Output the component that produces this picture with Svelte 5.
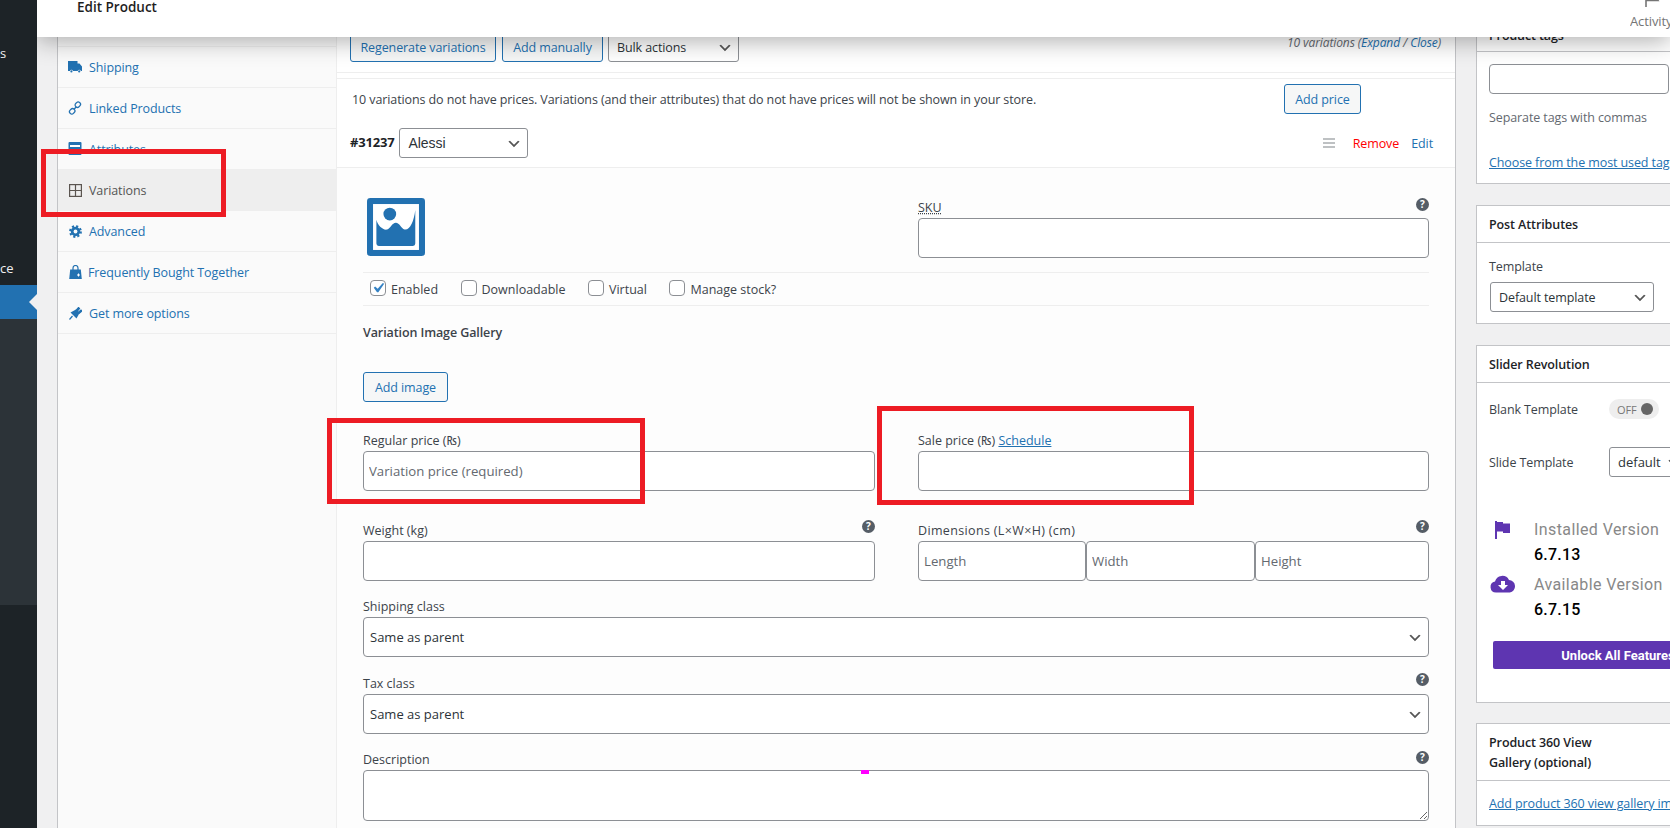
<script lang="ts">
const tabs = [
  { id: 'shipping', label: 'Shipping' },
  { id: 'linked', label: 'Linked Products' },
  { id: 'attributes', label: 'Attributes' },
  { id: 'variations', label: 'Variations', active: true },
  { id: 'advanced', label: 'Advanced' },
  { id: 'bought', label: 'Frequently Bought Together' },
  { id: 'options', label: 'Get more options' }
];
</script>

<div class="page">
  <nav class="adminmenu">
    <div class="menu-top">
      <span class="menu-s">s</span>
      <span class="menu-ce">ce</span>
    </div>
    <div class="menu-active"></div>
    <div class="menu-sub"></div>
  </nav>

  <div class="wpbody">
    <header class="topbar">
      <h1>Edit Product</h1>
      <div class="activity">
        <svg width="20" height="14" viewBox="0 0 20 14" fill="none" stroke="#757575" stroke-width="1.6">
          <path d="M4 0v14M4 1.5h12l-2 3 2 3H4" />
        </svg>
        <span>Activity</span>
      </div>
    </header>

    <section class="product-box">
      <ul class="tabs">
        {#each tabs as tab}
          <li class:active={tab.active}>
            <span class="tab-icon">
              {#if tab.id === 'shipping'}
                <svg width="14" height="12" viewBox="0 0 14 12" fill="#2271b1"><path d="M0 0h9.5v2.5h2L14 5.5V10h-1.2a1.6 1.6 0 0 0-3.1 0H5a1.6 1.6 0 0 0-3.1 0H0Z" /><circle cx="3.4" cy="10.4" r="1.1" /><circle cx="11.2" cy="10.4" r="1.1" /></svg>
              {:else if tab.id === 'linked'}
                <svg width="14" height="14" viewBox="0 0 14 14" fill="none" stroke="#2271b1" stroke-width="1.3"><path d="M6 8.200 8.400 5.800" /><rect x="7" y="1.400" width="5.600" height="4.600" rx="2.200" transform="rotate(-45 9.800 3.700)" /><rect x="1.400" y="8" width="5.600" height="4.600" rx="2.200" transform="rotate(-45 4.200 10.300)" /></svg>
              {:else if tab.id === 'attributes'}
                <svg width="14" height="14" viewBox="0 0 14 14"><rect width="13" height="13" x=".5" rx="1" fill="#2271b1" /><rect x="2" y="3" width="10" height="2" fill="#fff" /></svg>
              {:else if tab.id === 'variations'}
                <svg width="13" height="13" viewBox="0 0 13 13" fill="none" stroke="#5b5550" stroke-width="1.2"><rect x=".6" y=".6" width="11.800" height="11.800" /><path d="M6.500 .6v11.800M.6 6.500h11.800" /></svg>
              {:else if tab.id === 'advanced'}
                <svg width="13" height="13" viewBox="0 0 13 13"><circle cx="6.500" cy="6.500" r="4.700" fill="#2271b1" /><circle cx="6.500" cy="6.500" r="5.300" fill="none" stroke="#2271b1" stroke-width="2.200" stroke-dasharray="2.100 2.060" /><circle cx="6.500" cy="6.500" r="1.900" fill="#fafafa" /></svg>
              {:else if tab.id === 'bought'}
                <svg width="13" height="14" viewBox="0 0 13 14"><path d="M1.200 4.500h10.600l1 9.500H.2Z" fill="#2271b1" /><path d="M4 5V3a2.500 2.500 0 0 1 5 0v2" fill="none" stroke="#2271b1" stroke-width="1.200" /><path d="M8 10h3M9.500 8.500v3" stroke="#fff" stroke-width="1" /></svg>
              {:else}
                <svg width="13" height="13" viewBox="0 0 13 13" fill="#2271b1"><path d="M1.500 5.500 7 2.500l3.500 3.500-3 5.500Z" /><path d="M7 3.500 9.500.5l1 1-2.500 3ZM9 5.500l3-2.500 1 1-3 2.500ZM3.500 9 .5 12.500" stroke="#2271b1" stroke-width="1.200" /></svg>
              {/if}
            </span>
            <a href="#tab" class:bought={tab.id === 'bought'}>{tab.label}</a>
          </li>
        {/each}
      </ul>

      <div class="panel">
        <div class="toolbar">
          <button class="btn">Regenerate variations</button>
          <button class="btn">Add manually</button>
          <select class="wp-select bulk"><option>Bulk actions</option></select>
          <div class="count">10 variations (<a href="#x">Expand</a> / <a href="#x">Close</a>)</div>
        </div>

        <div class="notice">
          <p>10 variations do not have prices. Variations (and their attributes) that do not have prices will not be shown in your store.</p>
          <button class="btn">Add price</button>
        </div>

        <div class="variation-head">
          <strong>#31237</strong>
          <select class="wp-select alessi"><option>Alessi</option></select>
          <div class="head-actions">
            <svg width="12" height="10" viewBox="0 0 12 10" stroke="#7f8387" stroke-width="1.200"><path d="M0 1h12M0 5h12M0 9h12" /></svg>
            <a href="#x" class="remove">Remove</a>
            <a href="#x" class="edit">Edit</a>
          </div>
        </div>

        <div class="variation-body">
          <div class="image-row">
            <svg class="placeholder" width="58" height="58" viewBox="0 0 173 173">
              <rect width="173" height="173" rx="10" fill="#2271b1" />
              <rect x="18" y="18" width="137" height="137" fill="#fff" />
              <circle cx="68" cy="48" r="19" fill="#2271b1" />
              <path d="M28 65C32 82 48 97 60 94C70 91 75 74 86 74C97 74 102 91 112 94C128 97 140 70 144 36V136a7 7 0 0 1-7 7H35a7 7 0 0 1-7-7Z" fill="#2271b1" />
            </svg>
            <div class="field sku">
              <div class="label-row"><label for="sku"><abbr>SKU</abbr></label><span class="help">?</span></div>
              <input id="sku" type="text" />
            </div>
          </div>

          <div class="checks">
            <label class="enabled"><input type="checkbox" checked /> Enabled</label>
            <label class="downloadable"><input type="checkbox" /> Downloadable</label>
            <label class="virtual"><input type="checkbox" /> Virtual</label>
            <label><input type="checkbox" /> Manage stock?</label>
          </div>

          <h4>Variation Image Gallery</h4>
          <button class="btn add-image">Add image</button>

          <div class="two-col prices">
            <div class="field">
              <div class="label-row"><label for="regular">Regular price (₨)</label></div>
              <input id="regular" type="text" placeholder="Variation price (required)" />
            </div>
            <div class="field">
              <div class="label-row"><label for="sale">Sale price (₨) <a href="#x">Schedule</a></label></div>
              <input id="sale" type="text" />
            </div>
          </div>

          <div class="two-col weights">
            <div class="field">
              <div class="label-row"><label for="weight">Weight (kg)</label><span class="help">?</span></div>
              <input id="weight" type="text" />
            </div>
            <div class="field">
              <div class="label-row"><label for="length" class="dim-label">Dimensions (L×W×H) (cm)</label><span class="help">?</span></div>
              <div class="dims">
                <input id="length" type="text" placeholder="Length" />
                <input type="text" placeholder="Width" />
                <input type="text" placeholder="Height" />
              </div>
            </div>
          </div>

          <div class="field wide shipping">
            <div class="label-row"><label for="ship">Shipping class</label></div>
            <select id="ship" class="wp-select"><option>Same as parent</option></select>
          </div>

          <div class="field wide tax">
            <div class="label-row"><label for="tax">Tax class</label><span class="help">?</span></div>
            <select id="tax" class="wp-select"><option>Same as parent</option></select>
          </div>

          <div class="field wide desc">
            <div class="label-row"><label for="desc">Description</label><span class="help">?</span></div>
            <div class="desc-wrap">
              <textarea id="desc"></textarea>
              <span class="cursor-mark"></span>
            </div>
          </div>
        </div>
      </div>
    </section>

    <aside class="side">
      <div class="postbox tags">
        <h2>Product tags</h2>
        <div class="inside">
          <input type="text" />
          <p class="hint">Separate tags with commas</p>
          <a href="#x" class="block-link">Choose from the most used tags</a>
        </div>
      </div>

      <div class="postbox attrs">
        <h2>Post Attributes</h2>
        <div class="inside">
          <div class="tpl-label">Template</div>
          <select class="wp-select"><option>Default template</option></select>
        </div>
      </div>

      <div class="postbox slider">
        <h2>Slider Revolution</h2>
        <div class="inside">
          <div class="rs-row">
            <span class="rs-name">Blank Template</span>
            <span class="toggle">OFF<i></i></span>
          </div>
          <div class="rs-row slide">
            <span class="rs-name">Slide Template</span>
            <select class="wp-select"><option>default</option></select>
          </div>
          <div class="version installed">
            <svg width="18" height="18" viewBox="0 0 18 18" fill="#5e35b1"><path d="M1 0h2v18H1zM3 1h6v1.500h7v9.500H9v-1.500H3z" /></svg>
            <div><span>Installed Version</span><b>6.7.13</b></div>
          </div>
          <div class="version">
            <svg width="26" height="18" viewBox="0 0 26 18"><path d="M6 17.500a5.500 5.500 0 0 1-1-10.900A7.500 7.500 0 0 1 19 5a6.300 6.300 0 0 1 .8 12.500Z" fill="#5e35b1" /><path d="M11 6h4v4h3l-5 5-5-5h3Z" fill="#fff" /></svg>
            <div><span>Available Version</span><b>6.7.15</b></div>
          </div>
          <button class="unlock">Unlock All Features</button>
        </div>
      </div>

      <div class="postbox p360">
        <h2>Product 360 View<br />Gallery (optional)</h2>
        <div class="inside">
          <a href="#x" class="block-link">Add product 360 view gallery images</a>
        </div>
      </div>
    </aside>

    <div class="mark mark-variations"></div>
    <div class="mark mark-regular"></div>
    <div class="mark mark-sale"></div>
  </div>
</div>

<style>
  :global(body) {
    margin: 0;
    background: #f0f0f1;
  }

  .page {
    display: flex;
    width: 1670px;
    height: 828px;
    overflow: hidden;
    font-family: "Open Sans", "Noto Sans", sans-serif;
    font-size: 12.5px;
    letter-spacing: -0.1px;
    color: #3c434a;
  }

  a {
    color: #2271b1;
    text-decoration: none;
  }

  /* admin menu */
  .adminmenu {
    flex: 0 0 37px;
    display: flex;
    flex-direction: column;
    background: #1d2327;
    color: #f0f0f1;
    font-size: 13px;
  }
  .menu-top {
    height: 285px;
    display: flex;
    flex-direction: column;
  }
  .menu-s {
    margin-top: 43px;
    line-height: 20px;
  }
  .menu-ce {
    margin-top: 195px;
    line-height: 20px;
  }
  .menu-active {
    height: 34px;
    background: #2271b1;
    position: relative;
  }
  .menu-active::after {
    content: "";
    position: absolute;
    right: 0;
    top: 9px;
    border: 8px solid transparent;
    border-left: 0;
    border-right-color: #f0f0f1;
  }
  .menu-sub {
    height: 286px;
    background: #2c3338;
  }

  .wpbody {
    flex: 1;
    position: relative;
    display: flex;
    align-items: flex-start;
    padding-left: 20px;
    min-width: 0;
    overflow: hidden;
  }

  /* top bar */
  .topbar {
    position: absolute;
    z-index: 5;
    top: 0;
    left: 0;
    right: 0;
    height: 37px;
    display: flex;
    justify-content: space-between;
    background: #fff;
    box-shadow: 0 4px 24px rgba(0, 0, 0, 0.32);
    overflow: visible;
  }
  .topbar h1 {
    margin: 0 0 0 40px;
    font-size: 13.5px;
    font-weight: 600;
    line-height: 14px;
    color: #1e1e1e;
    letter-spacing: 0;
  }
  .activity {
    width: 40px;
    display: flex;
    flex-direction: column;
    color: #757575;
    font-size: 13px;
    white-space: nowrap;
    overflow: hidden;
  }
  .activity svg {
    margin: -7px 0 5px 12px;
    flex: none;
  }

  /* product data box */
  .product-box {
    flex: 0 0 1399px;
    height: 828px;
    display: flex;
    box-sizing: border-box;
    border-left: 1px solid #c3c4c7;
    border-right: 1px solid #c3c4c7;
    background: #fff;
  }
  .tabs {
    flex: 0 0 279px;
    margin: 0;
    padding: 46px 0 0;
    list-style: none;
    background: #fafafa;
    border-right: 1px solid #eee;
    box-sizing: border-box;
  }
  .tabs li {
    height: 41px;
    box-sizing: border-box;
    display: flex;
    align-items: center;
    padding-left: 10px;
    border-top: 1px solid #eee;
    gap: 7px;
  }
  .tabs li:last-child {
    border-bottom: 1px solid #eee;
    height: 42px;
  }
  .tabs li.active {
    background: #eee;
  }
  .tabs li.active a {
    color: #555;
  }
  .tab-icon {
    width: 14px;
    display: flex;
    justify-content: center;
  }
  .tabs a.bought {
    margin-left: -1px;
  }

  .panel {
    flex: 1;
    min-width: 0;
    display: flex;
    flex-direction: column;
  }
  .panel > div {
    flex-shrink: 0;
  }

  .btn {
    height: 30px;
    padding: 0 10px;
    font: inherit;
    color: #2271b1;
    background: #f6f7f7;
    border: 1px solid #2271b1;
    border-radius: 3px;
    letter-spacing: inherit;
  }

  .wp-select {
    appearance: none;
    height: 30px;
    padding: 0 24px 0 8px;
    font: inherit;
    letter-spacing: inherit;
    color: #2c3338;
    border: 1px solid #8c8f94;
    border-radius: 3px;
    background: #fff url('data:image/svg+xml;utf8,<svg xmlns="http://www.w3.org/2000/svg" width="20" height="20"><path d="M5 6l5 5 5-5 2 1-7 7-7-7z" fill="%23555"/></svg>') no-repeat right 5px top 55%;
    background-size: 16px 16px;
  }

  .toolbar {
    height: 73px;
    box-sizing: border-box;
    padding: 32px 14px 0 13px;
    display: flex;
    align-items: flex-start;
    gap: 6px;
    border-bottom: 1px solid #eee;
  }
  .toolbar .btn:first-child {
    width: 146px;
    padding: 0;
  }
  .toolbar .btn:nth-child(2) {
    width: 101px;
    padding: 0;
  }
  .bulk {
    width: 131px;
    margin-left: -1px;
  }
  .count {
    margin: 2px 0 0 auto;
    font-style: italic;
    font-size: 12px;
    line-height: 18px;
    color: #646970;
  }

  .notice {
    height: 42px;
    box-sizing: border-box;
    margin-top: 5px;
    padding: 5px 94px 0 15px;
    display: flex;
    justify-content: space-between;
    border-top: 1px solid #eee;
  }
  .notice p {
    margin: 1px 0 0;
    line-height: 30px;
  }
  .notice .btn {
    width: 77px;
    padding: 0;
  }

  .variation-head {
    height: 48px;
    box-sizing: border-box;
    padding: 8px 22px 0 13px;
    display: flex;
    align-items: flex-start;
    gap: 5px;
    border-bottom: 1px solid #eee;
  }
  .variation-head strong {
    color: #1d2327;
    line-height: 28px;
    font-size: 13px;
    letter-spacing: -0.2px;
  }
  .alessi {
    width: 129px;
    font-family: "Liberation Sans", Arial, sans-serif;
    font-size: 14px;
    letter-spacing: 0;
  }
  .head-actions {
    margin-left: auto;
    display: flex;
    align-items: center;
    height: 30px;
  }
  .remove {
    margin-left: 18px;
    color: #f00;
  }
  .edit {
    margin-left: 12px;
  }

  .variation-body {
    flex: 1;
    background: #fdfdfd;
    padding: 0 26px;
  }

  .image-row {
    height: 105px;
    box-sizing: border-box;
    display: flex;
    justify-content: space-between;
    padding-top: 30px;
    border-bottom: 1px solid #eee;
  }
  .placeholder {
    margin-left: 4px;
  }
  .sku {
    width: 511px;
  }

  .field {
    display: flex;
    flex-direction: column;
    min-width: 0;
  }
  .label-row {
    display: flex;
    justify-content: space-between;
    align-items: flex-start;
    height: 20px;
    line-height: 20px;
    letter-spacing: 0;
  }
  .label-row a {
    text-decoration: underline;
  }
  .dim-label {
    letter-spacing: 0.35px;
  }
  .help {
    width: 13px;
    height: 13px;
    border-radius: 50%;
    background: #555d66;
    color: #fff;
    font-size: 10px;
    font-weight: 700;
    line-height: 13px;
    text-align: center;
    margin-top: 1px;
  }
  .weights .help,
  .tax .help {
    margin-top: -1px;
  }
  .sku .help {
    margin-top: 0;
  }
  abbr {
    text-decoration: underline dotted;
  }
  input[type="text"],
  textarea {
    box-sizing: border-box;
    width: 100%;
    margin: 0;
    border: 1px solid #8c8f94;
    border-radius: 4px;
    background: #fff;
    font: inherit;
    font-size: 13.2px;
    letter-spacing: 0;
    color: #2c3338;
    padding: 0 5px;
  }
  input[type="text"] {
    height: 40px;
  }
  input::placeholder {
    color: #646970;
    opacity: 1;
  }

  .checks {
    height: 32px;
    display: flex;
    align-items: center;
    padding-left: 7px;
    gap: 22.5px;
    letter-spacing: 0;
    border-bottom: 1px solid #eee;
  }
  .checks label {
    display: flex;
    align-items: center;
    gap: 5px;
  }
  input[type="checkbox"] {
    appearance: none;
    width: 16px;
    height: 16px;
    margin: -3px 0 0;
    border: 1px solid #8c8f94;
    border-radius: 4px;
    background: #fff;
  }
  input[type="checkbox"]:checked {
    background: #fff url('data:image/svg+xml;utf8,<svg xmlns="http://www.w3.org/2000/svg" viewBox="0 0 20 20"><path d="M14.830 4.890l1.340.940-5.810 8.380H9.020L5.780 9.670l1.340-1.250 2.570 2.400z" fill="%233582c4"/></svg>') center / 20px no-repeat;
  }
  .enabled {
    margin-right: 0;
  }

  h4 {
    margin: 17px 0 0;
    font-size: 12.5px;
    font-weight: 600;
    line-height: 20px;
  }
  .add-image {
    display: block;
    margin-top: 29px;
    width: 85px;
    padding: 0;
  }

  .two-col {
    display: grid;
    grid-template-columns: 512px 511px;
    column-gap: 43px;
  }
  .prices {
    margin-top: 29px;
  }
  .weights {
    margin-top: 30px;
  }
  .dims {
    display: grid;
    grid-template-columns: 168px 169px 174px;
  }

  .shipping {
    margin-top: 16px;
  }
  .tax {
    margin-top: 17px;
  }
  .desc {
    margin-top: 16px;
  }
  .desc-wrap {
    position: relative;
  }
  textarea {
    display: block;
    height: 51px;
  }
  .field.wide .wp-select {
    width: 100%;
    height: 40px;
    border-radius: 4px;
    padding-left: 6px;
    font-size: 13px;
    letter-spacing: 0;
  }
  .cursor-mark {
    position: absolute;
    left: 498px;
    top: 0;
    width: 8px;
    height: 4px;
    background: #f0f;
  }

  /* sidebar boxes */
  .side {
    flex: 0 0 280px;
    margin: 14px 0 0 20px;
    display: flex;
    flex-direction: column;
    gap: 21px;
  }
  .postbox {
    box-sizing: border-box;
    border: 1px solid #c3c4c7;
    background: #fff;
  }
  .postbox h2 {
    margin: 0;
    padding: 9px 12px 7px;
    font-size: 12.5px;
    font-weight: 600;
    line-height: 20px;
    color: #1d2327;
    border-bottom: 1px solid #c3c4c7;
  }
  .tags h2 {
    padding: 11px 12px 5px;
  }
  .inside {
    padding: 0 12px;
  }
  .tags {
    height: 170px;
  }
  .tags .inside {
    padding-top: 12px;
  }
  .tags input[type="text"] {
    width: 180px;
    height: 30px;
  }
  .hint {
    margin: 14px 0 0;
    line-height: 20px;
    color: #646970;
  }
  .block-link {
    display: block;
    white-space: nowrap;
    text-decoration: underline;
    line-height: 20px;
  }
  .tags .block-link {
    margin-top: 25px;
  }

  .attrs {
    height: 119px;
  }
  .tpl-label {
    margin-top: 14px;
    line-height: 20px;
  }
  .attrs .wp-select {
    width: 164px;
    margin: 5px 0 0 1px;
    display: block;
    padding-left: 8px;
  }

  .slider {
    height: 358px;
  }
  .rs-row {
    display: flex;
    align-items: center;
    margin-top: 16px;
  }
  .rs-name {
    flex: 0 0 120px;
  }
  .toggle {
    width: 50px;
    height: 20px;
    box-sizing: border-box;
    padding: 0 6px 0 8px;
    display: flex;
    align-items: center;
    justify-content: space-between;
    border-radius: 10px;
    background: #eee;
    color: #777;
    font-size: 11px;
  }
  .toggle i {
    width: 12px;
    height: 12px;
    border-radius: 50%;
    background: #666;
  }
  .rs-row.slide {
    margin-top: 28px;
  }
  .slide .wp-select {
    width: 79px;
    flex: none;
    font-size: 13px;
    letter-spacing: 0;
  }
  .version {
    display: flex;
    align-items: flex-start;
    font-family: Roboto, sans-serif;
    letter-spacing: 0.2px;
  }
  .version.installed {
    margin-top: 40px;
  }
  .version svg {
    flex: none;
    margin: 3px 18px 0 1px;
  }
  .version.installed svg {
    margin: 4px 22px 0 5px;
  }
  .version div {
    display: flex;
    flex-direction: column;
  }
  .version span {
    font-size: 16px;
    line-height: 25px;
    color: #888;
    letter-spacing: 0.4px;
  }
  .version b {
    font-size: 16px;
    font-weight: 500;
    line-height: 25px;
    color: #000;
    margin-top: 0;
    margin-bottom: 5px;
  }
  .unlock {
    display: block;
    width: 250px;
    height: 28px;
    margin: 14px 0 0 4px;
    border: 0;
    border-radius: 2px;
    background: #5e35b1;
    color: #fff;
    font-family: Roboto, sans-serif;
    font-size: 13px;
    font-weight: 700;
  }

  .p360 {
    height: 103px;
    margin-top: -1px;
  }
  .p360 .block-link {
    margin-top: 13px;
  }

  /* red annotation frames drawn on the screenshot */
  .mark {
    position: absolute;
    z-index: 6;
    box-sizing: border-box;
    border: 5px solid #ed1c24;
  }
  .mark-variations {
    left: 4px;
    top: 149px;
    width: 185px;
    height: 68px;
  }
  .mark-regular {
    left: 290px;
    top: 418px;
    width: 318px;
    height: 86px;
  }
  .mark-sale {
    left: 840px;
    top: 406px;
    width: 317px;
    height: 99px;
  }
</style>
